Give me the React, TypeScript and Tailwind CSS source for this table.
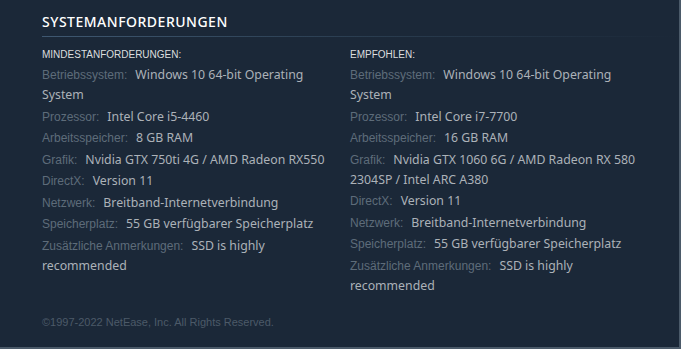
import React from "react";

type Row = { label: string; value: string };

const minReq: Row[] = [
  { label: "Betriebssystem:", value: "Windows 10 64-bit Operating System" },
  { label: "Prozessor:", value: "Intel Core i5-4460" },
  { label: "Arbeitsspeicher:", value: "8 GB RAM" },
  { label: "Grafik:", value: "Nvidia GTX 750ti 4G / AMD Radeon RX550" },
  { label: "DirectX:", value: "Version 11" },
  { label: "Netzwerk:", value: "Breitband-Internetverbindung" },
  { label: "Speicherplatz:", value: "55 GB verfügbarer Speicherplatz" },
  { label: "Zusätzliche Anmerkungen:", value: "SSD is highly recommended" },
];

const recReq: Row[] = [
  { label: "Betriebssystem:", value: "Windows 10 64-bit Operating System" },
  { label: "Prozessor:", value: "Intel Core i7-7700" },
  { label: "Arbeitsspeicher:", value: "16 GB RAM" },
  { label: "Grafik:", value: "Nvidia GTX 1060 6G / AMD Radeon RX 580 2304SP / Intel ARC A380" },
  { label: "DirectX:", value: "Version 11" },
  { label: "Netzwerk:", value: "Breitband-Internetverbindung" },
  { label: "Speicherplatz:", value: "55 GB verfügbarer Speicherplatz" },
  { label: "Zusätzliche Anmerkungen:", value: "SSD is highly recommended" },
];

function Column({ title, rows }: { title: string; rows: Row[] }) {
  return (
    <div className="w-[296px]">
      <div className="font-['Liberation_Sans',Arial,sans-serif] text-[10px] leading-[14px] uppercase text-[#dcdedf] mb-[3px]">
        {title}
      </div>
      <ul className="flex flex-col gap-[1.5px]">
        {rows.map((r) => (
          <li key={r.label} className="text-[12.3px] leading-[20px]">
            <span className="font-['Liberation_Sans',Arial,sans-serif] text-[12px] text-[#5e6c7a] mr-[8px]">{r.label}</span>
            <span className="font-['Noto_Sans','Open_Sans',sans-serif] text-[#acb2b8]">{r.value}</span>
          </li>
        ))}
      </ul>
    </div>
  );
}

export default function App() {
  return (
    <div className="w-[681px] h-[349px] bg-[#1b2838] border-r-2 border-b-2 border-[#4b5a69] overflow-hidden flex flex-col">
      <div className="pl-[42px] pt-[12px]">
        <h2 className="font-['Noto_Sans','Open_Sans',sans-serif] text-[14px] leading-[20px] font-medium tracking-[0.5px] uppercase text-[#ffffff] pb-[4px]">
          Systemanforderungen
        </h2>
        <div className="h-px bg-gradient-to-r from-[#3f5871] via-[#2a3d50] to-transparent"></div>
      </div>
      <div className="pl-[42px] pt-[11px] flex gap-[12px]">
        <Column title="Mindestanforderungen:" rows={minReq} />
        <Column title="Empfohlen:" rows={recReq} />
      </div>
      <div className="pl-[42px] mt-auto mb-[18px] font-['Liberation_Sans',Arial,sans-serif] text-[11px] leading-[14px] text-[#4c5a68]">
        ©1997-2022 NetEase, Inc. All Rights Reserved.
      </div>
    </div>
  );
}
